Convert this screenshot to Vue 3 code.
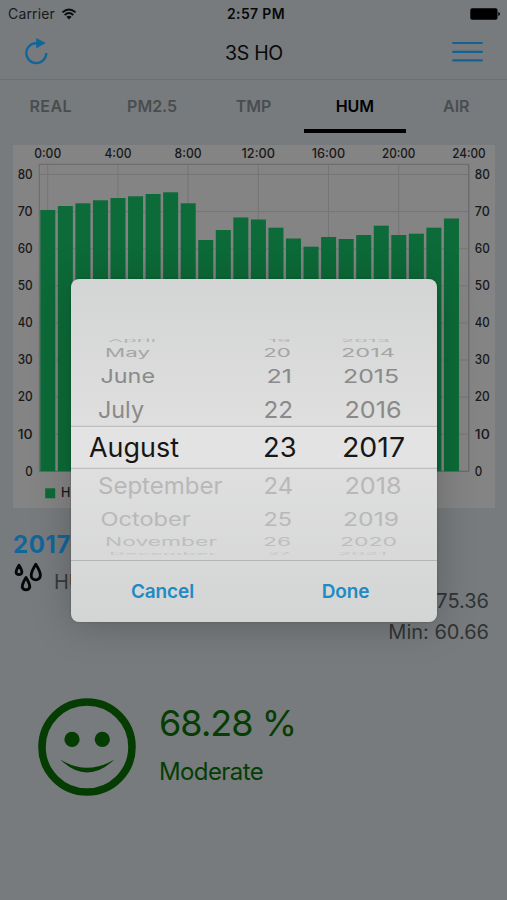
<script setup>
const values = [210, 206, 203.3, 200.3, 198, 196.3, 194, 192.3, 203.3, 240, 230, 217.5, 219.5, 227.7, 238.5, 246.7, 237, 239, 235, 225.7, 235, 233.7, 227.7, 218.5]
const bars = values.map((top, i) => ({ x: 27.3 + i * 17.55, y: top - 145, h: 471.2 - top - 145 + 145 }))
const hours = ['0:00', '4:00', '8:00', '12:00', '16:00', '20:00', '24:00'].map((label, i) => ({
  label, x: 34.7 + i * 70.2, w: label.length === 4 ? 27 : 33.5
}))
const levels = [80, 70, 60, 50, 40, 30, 20, 10, 0].map((v) => ({ v, y: 326.3 - v * 3.71, w: v ? 15 : 7.5 }))

const tabs = ['REAL', 'PM2.5', 'TMP', 'HUM', 'AIR']

// Each wheel row: baseline, cap height, tone, and [text, start, width] per column
const rows = [
  { y: 63, cap: 2.8, tone: 'edge', cells: [['April', 37, 48], ['19', 197, 23], ['2013', 270, 49]] },
  { y: 77.5, cap: 8.3, tone: 'far', cells: [['May', 34, 45], ['20', 192.3, 27.5], ['2014', 270, 54]] },
  { y: 104, cap: 14, tone: 'mid', cells: [['June', 29.5, 54.5], ['21', 195.5, 25.5], ['2015', 272, 56]] },
  { y: 138.5, cap: 16.9, tone: 'near', cells: [['July', 27, 46], ['22', 192.5, 29.5], ['2016', 273.5, 57]] },
  { y: 178.3, cap: 19.2, tone: 'current', cells: [['August', 18, 90], ['23', 192, 33.5], ['2017', 271, 63]] },
  { y: 215, cap: 16.9, tone: 'below', cells: [['September', 27, 124.5], ['24', 192.5, 29.5], ['2018', 273.5, 57]] },
  { y: 246.5, cap: 13.5, tone: 'below', cells: [['October', 29.5, 90], ['25', 192.5, 28.5], ['2019', 272, 56]] },
  { y: 267.3, cap: 8.3, tone: 'below-far', cells: [['November', 34, 112], ['26', 192, 28], ['2020', 269, 57]] },
  { y: 276, cap: 2.6, tone: 'below-edge', cells: [['December', 38, 108], ['27', 197, 22], ['2021', 267, 49]] }
]
const fontFor = (row) => (row.cap > 15 ? row.cap / 0.727 : 22)
const squash = (row) => row.cap / 0.727 / fontFor(row)
</script>

<template>
  <main class="screen">
    <header class="status">
      <div class="carrier">
        <span>Carrier</span>
        <svg width="16" height="12" viewBox="0 0 16 12">
          <path d="M1.4 4.4Q8-1.3 14.6 4.4M3.7 7Q8 3.2 12.3 7" fill="none" stroke="#0b0c0d" stroke-width="1.9" />
          <path d="M5.4 8.8Q8 6.7 10.6 8.8L8 11.5Z" fill="#0b0c0d" />
        </svg>
      </div>
      <span class="clock">2:57 PM</span>
      <svg class="battery" width="31" height="12" viewBox="0 0 31 12">
        <rect x=".3" y=".3" width="27.2" height="11.4" rx="1.8" fill="#000" />
        <path d="M28.3 4Q30 4.3 30 6T28.3 8Z" fill="#000" />
      </svg>
    </header>

    <nav class="bar">
      <svg width="24" height="28" viewBox="0 0 24 28">
        <path d="M14 5.1H11.4A10 10 0 1 0 21.3 15.1" fill="none" stroke="#12659a" stroke-width="2.3" />
        <path d="M11.2 0 20.8 4.9 11.2 10.2Z" fill="#12659a" />
      </svg>
      <h1>3S HO</h1>
      <svg width="31" height="22" viewBox="0 0 31 22">
        <path d="M.3 2H30.7M.3 10.8H30.7M.3 19.4H30.7" stroke="#146294" stroke-width="2.2" />
      </svg>
    </nav>

    <div class="tabs">
      <span v-for="t in tabs" :key="t" :class="['tab', { active: t === 'HUM' }]">{{ t }}</span>
    </div>

    <svg class="chart" width="482" height="363" viewBox="0 0 482 363">
      <rect width="482" height="363" fill="#848485" />
      <g stroke="#757575" stroke-width="1">
        <line v-for="l in levels" :key="l.v" x1="26" x2="456" :y1="l.y" :y2="l.y" />
        <line v-for="h in hours" :key="h.label" :x1="h.x" :x2="h.x" y1="19.5" y2="326.3" />
      </g>
      <rect x="26.3" y="19.3" width="429.4" height="307" fill="none" stroke="#6a6a6a" />
      <rect v-for="(b, i) in bars" :key="i" :x="b.x" :y="b.y" width="15" :height="b.h" fill="#0c6b38" />
      <g class="axis">
        <text v-for="h in hours" :key="h.label" :x="h.x - h.w / 2" y="12.6" :textLength="h.w" lengthAdjust="spacingAndGlyphs">{{ h.label }}</text>
        <g v-for="l in levels" :key="l.v">
          <text :x="19.7 - l.w" :y="l.y + 4.3" :textLength="l.w" lengthAdjust="spacingAndGlyphs">{{ l.v }}</text>
          <text x="461.8" :y="l.y + 4.3" :textLength="l.w" lengthAdjust="spacingAndGlyphs">{{ l.v }}</text>
        </g>
        <text x="48" y="352.3">HUM</text>
      </g>
      <rect x="32.2" y="343.3" width="10" height="10" fill="#0c6b38" />
    </svg>

    <section class="summary">
      <div class="date">2017-08-23</div>
      <div class="metric">
        <svg width="30" height="32" viewBox="0 0 30 32">
          <g fill="none" stroke="#050606" stroke-width="2.8" stroke-linejoin="round">
            <path d="M6 3.2Q3.1 8 3.1 10.3A3 3 0 0 0 8.9 10.3Q8.9 8 6 3.2Z" />
            <path d="M22.8 2.2Q18.2 9.5 18.2 13.2A4.6 4.6 0 0 0 27.4 13.2Q27.4 9.5 22.8 2.2Z" />
            <path d="M13 15.4Q9.2 21.6 9.2 24.9A3.9 3.9 0 0 0 16.8 24.9Q16.8 21.6 13 15.4Z" />
          </g>
        </svg>
        <span>HUM</span>
      </div>
      <div class="range">
        <span>Max: 75.36</span>
        <span>Min: 60.66</span>
      </div>
    </section>

    <section class="reading">
      <svg width="98" height="98" viewBox="0 0 98 98">
        <circle cx="49" cy="49" r="45" fill="none" stroke="#043c02" stroke-width="7.6" />
        <circle cx="34" cy="41.4" r="7.6" fill="#043c02" />
        <circle cx="64.3" cy="41.4" r="7.6" fill="#043c02" />
        <path d="M22.2 61.5Q49 78 76.4 61.5Q49 87.5 22.2 61.5Z" fill="#043c02" />
      </svg>
      <div class="level">
        <strong>68.28 %</strong>
        <span>Moderate</span>
      </div>
    </section>

    <div class="dialog" role="dialog">
      <svg class="wheel" width="366" height="281" viewBox="0 0 366 281">
        <rect y="147.3" width="366" height="42" class="selected" />
        <path d="M0 147.3H366M0 189.3H366" stroke="#b4b6b6" stroke-width="1" />
        <g v-for="row in rows" :key="row.y" :class="row.tone" :font-size="fontFor(row)">
          <text
            v-for="c in row.cells"
            :key="c[0]"
            :transform="`translate(${c[1]} ${row.y}) scale(1 ${squash(row)})`"
            :textLength="c[2]"
            lengthAdjust="spacingAndGlyphs"
          >{{ c[0] }}</text>
        </g>
      </svg>
      <div class="actions">
        <button>Cancel</button>
        <button>Done</button>
      </div>
    </div>
  </main>
</template>

<style>
body { margin: 0; }
</style>

<style scoped>
.screen {
  position: relative;
  display: flex;
  flex-direction: column;
  width: 507px;
  height: 900px;
  overflow: hidden;
  background: #777b7e;
  font-family: Inter, "Liberation Sans", sans-serif;
  color: #08090a;
}
svg { display: block; flex: none; }
.status {
  display: grid;
  grid-template-columns: 1fr auto 1fr;
  align-items: center;
  height: 27px;
  padding: 0 6px 0 8px;
  box-sizing: border-box;
  font-size: 14px;
}
.carrier { display: flex; align-items: center; gap: 6px; color: #17191a; letter-spacing: 0.15px; }
.clock { padding-left: 3px; font-weight: 600; letter-spacing: 0.35px; }
.battery { justify-self: end; }
.bar {
  display: grid;
  grid-template-columns: 1fr auto 1fr;
  align-items: center;
  height: 53px;
  padding: 0 24px 2px 25px;
  box-sizing: border-box;
  border-bottom: 1px solid #6d7073;
}
.bar svg:last-child { justify-self: end; }
h1 { margin: 2px 0 0; font-size: 19.5px; font-weight: 400; line-height: 24px; letter-spacing: -0.3px; }
.tabs { display: grid; grid-template-columns: repeat(5, 1fr); height: 53px; }
.tab {
  padding-top: 15px;
  box-sizing: border-box;
  border-bottom: 4px solid transparent;
  text-align: center;
  font-size: 16px;
  font-weight: 600;
  line-height: 22px;
  color: #4a4d4f;
}
.tab:first-child { letter-spacing: 0.4px; }
.active { color: #000; border-color: #000; }
.chart { margin: 12px 0 0 13px; }
.axis { font-size: 12.6px; font-weight: 500; fill: #181818; }
.summary {
  display: grid;
  grid-template-columns: 1fr 1fr;
  grid-template-rows: 28px 24px 1fr;
  height: 172px;
  padding: 23px 18px 0 13px;
  box-sizing: border-box;
}
.date { grid-column: 1 / 3; font-size: 24px; font-weight: 700; line-height: 28px; letter-spacing: 0.6px; color: #11669a; }
.metric { display: flex; gap: 11px; height: 36px; padding-top: 3px; font-size: 20px; line-height: 40px; color: #36393a; }
.range {
  grid-column: 2;
  grid-row: 2 / 4;
  display: flex;
  flex-direction: column;
  align-items: flex-end;
  padding-top: 27px;
  font-size: 20px;
  line-height: 31px;
  color: #313435;
}
.reading { display: flex; gap: 23px; padding: 17.5px 38px; color: #053d03; }
.level { display: flex; flex-direction: column; }
.level strong { padding-top: 1px; font-size: 36px; font-weight: 400; line-height: 48px; letter-spacing: -0.95px; }
.level span { margin-top: 7px; font-size: 24px; line-height: 36px; letter-spacing: -0.6px; }
.dialog {
  position: absolute;
  left: 71px;
  top: 279px;
  width: 366px;
  height: 343px;
  border-radius: 8px;
  overflow: hidden;
  background: linear-gradient(#d3d4d4, #dfdfdf 43%, #dfdfdf 55%, #d3d4d4);
  box-shadow: 0 0 2px rgba(0, 0, 0, 0.25), 0 2px 40px rgba(0, 0, 0, 0.22);
}
.wheel { border-bottom: 1px solid #b2b5b5; }
.selected { fill: #e3e3e3; }
.current { fill: #161616; }
.near { fill: #8a8a8a; }
.mid { fill: #8a8a8a; }
.far { fill: #a4a4a4; }
.edge { fill: #b4b4b4; }
.below { fill: #b8b8b8; }
.below-far { fill: #bebebe; }
.below-edge { fill: #c6c6c6; }
.actions { display: grid; grid-template-columns: 1fr 1fr; height: 61px; }
button {
  border: 0;
  padding: 1px 0 0;
  background: none;
  font: 600 19px/60px Inter, "Liberation Sans", sans-serif;
  letter-spacing: -0.1px;
  color: #218ac4;
}
</style>
